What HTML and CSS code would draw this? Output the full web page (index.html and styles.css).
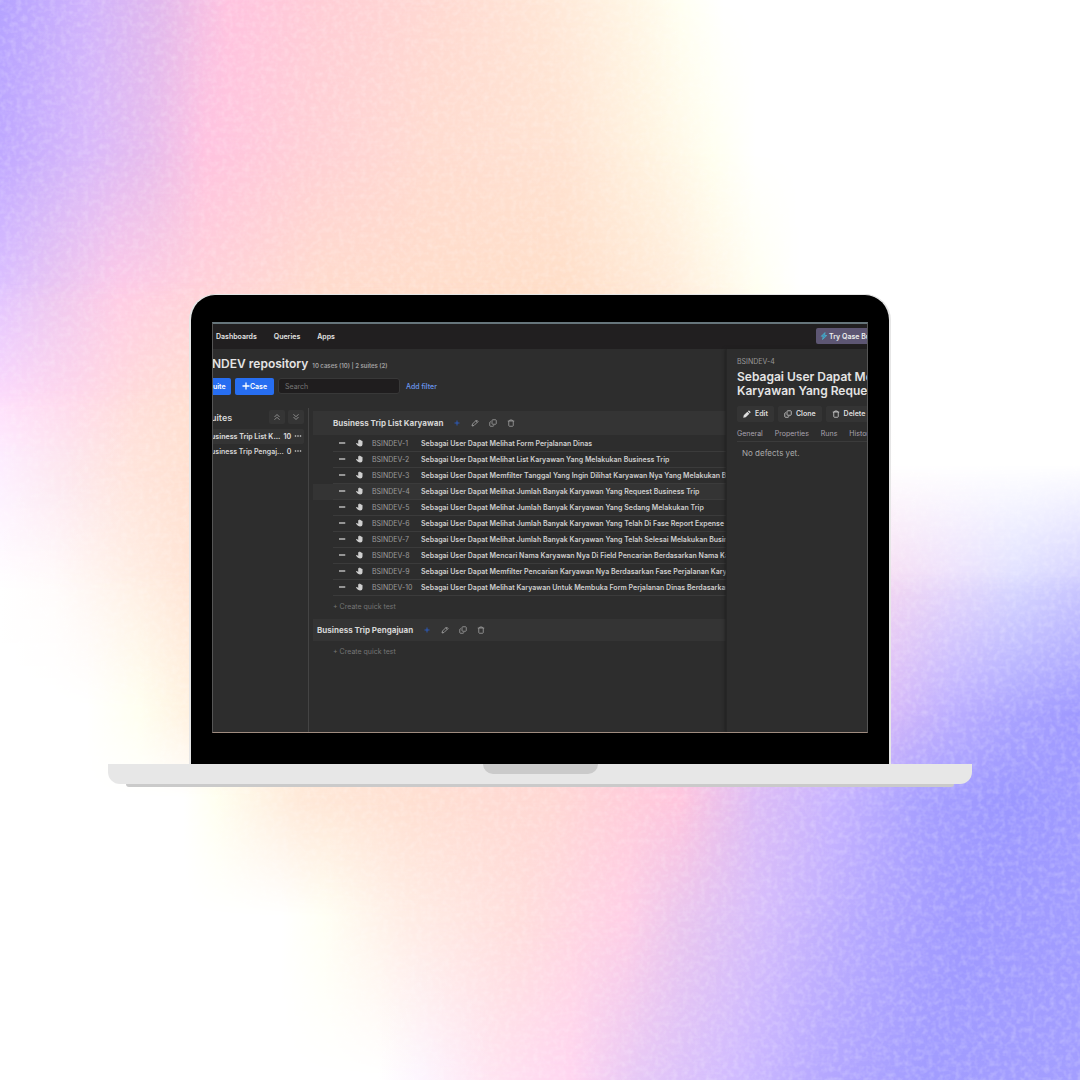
FILE: index.html
```html
<!DOCTYPE html>
<html lang="id">
<head>
<meta charset="utf-8">
<title>BSINDEV repository</title>
<meta name="viewport" content="width=device-width, initial-scale=1">
<link rel="stylesheet" href="styles.css">
</head>
<body>
<svg class="sprite" aria-hidden="true">
  <symbol id="pencil" viewBox="0 0 16 16"><path d="M2 14l1-4 8-8 3 3-8 8z" fill="none" stroke="currentColor" stroke-width="1.6" stroke-linejoin="round"/><path d="M9.400 3.600l3 3" stroke="currentColor" stroke-width="1.600"/></symbol>
  <symbol id="pencil-solid" viewBox="0 0 16 16"><path d="M.5 15.500l1-5 7.200-7.200 4 4-7.200 7.200zM9.700 2.300l1-1q1-1 2 0l2 2q1 1 0 2l-1 1z" fill="currentColor"/></symbol>
  <symbol id="copy" viewBox="0 0 16 16"><rect x="6" y="1.500" width="8.500" height="9" rx="1.500" fill="none" stroke="currentColor" stroke-width="1.500"/><path d="M4 5.500H3Q1.500 5.500 1.500 7v6q0 1.500 1.500 1.500h5q1.500 0 1.500-1.500v-.5" fill="none" stroke="currentColor" stroke-width="1.500"/></symbol>
  <symbol id="trash" viewBox="0 0 16 16"><path d="M1.500 4h13M5.500 4V2h5v2M3.500 4v9q0 1.500 1.500 1.500h6q1.500 0 1.500-1.500V4" fill="none" stroke="currentColor" stroke-width="1.500"/></symbol>
  <symbol id="plus" viewBox="0 0 16 16"><path d="M8 1v14M1 8h14" stroke="currentColor" stroke-width="2.600"/></symbol>
  <symbol id="plus-thin" viewBox="0 0 16 16"><path d="M8 3v10M3 8h10" stroke="currentColor" stroke-width="1.600"/></symbol>
  <symbol id="minus" viewBox="0 0 16 16"><path d="M2 8h12.500" stroke="currentColor" stroke-width="2.600"/></symbol>
  <symbol id="hand" viewBox="0 0 16 16"><path d="M4.400 8V3.200q0-1 1-1t1 1V2q0-1 1.100-1t1.100 1v.800q0-1 1.100-1t1.100 1v1.600q0-1 1.100-1t1.100 1V10q0 5-5 5Q4.500 15 2.800 12.700L.6 9.800Q-.1 8.700.9 8.100q.9-.5 1.700.3l1.800 1.600z" fill="currentColor"/></symbol>
  <symbol id="up" viewBox="0 0 16 16"><path d="M3 8l5-5 5 5M3 13.500l5-5 5 5" fill="none" stroke="currentColor" stroke-width="1.500"/></symbol>
  <symbol id="down" viewBox="0 0 16 16"><path d="M3 2.500l5 5 5-5M3 8l5 5 5-5" fill="none" stroke="currentColor" stroke-width="1.500"/></symbol>
  <symbol id="dots" viewBox="0 0 16 16"><circle cx="3" cy="8" r="1.600" fill="currentColor"/><circle cx="8" cy="8" r="1.600" fill="currentColor"/><circle cx="13" cy="8" r="1.600" fill="currentColor"/></symbol>
  <symbol id="bolt" viewBox="0 0 16 16"><path d="M10 1L2.500 8.500h4L5 15l8.500-8h-4z" fill="#3c8fb8" stroke="#4fc3d9" stroke-width="1.200" stroke-linejoin="round"/></symbol>
</svg>
<div class="scene">
  <div class="backdrop" aria-hidden="true">
    <div class="band band-1"></div><div class="band band-2"></div><div class="band band-3"></div><div class="band band-4"></div><div class="band band-5"></div><div class="band band-6"></div><div class="band band-7"></div><div class="band band-8"></div><div class="band band-9"></div><div class="band band-10"></div>
    <svg class="band grain"><filter id="speckle" x="0" y="0" width="100%" height="100%"><feTurbulence type="fractalNoise" baseFrequency="0.18" numOctaves="2" seed="4"/><feColorMatrix values="0 0 0 0 1  0 0 0 0 1  0 0 0 0 1  1.800 0 0 0 -0.720"/></filter><rect width="100%" height="100%" filter="url(#speckle)"/></svg>
  </div>
  <main class="laptop">
    <div class="lid">
      <div class="screen">
        <header class="topbar">
          <nav class="nav"><a href="#">Dashboards</a><a href="#">Queries</a><a href="#">Apps</a></nav>
          <button class="try"><svg class="icon"><use href="#bolt"/></svg>Try Qase Business</button>
        </header>
        <div class="app">
          <section class="repo">
            <div class="heading"><h1>NDEV repository</h1><span class="stats">10 cases (10) | 2 suites (2)</span></div>
            <div class="toolbar">
              <button class="primary primary-cut">uite</button>
              <button class="primary"><svg class="icon"><use href="#plus"/></svg>Case</button>
              <input class="search" type="text" placeholder="Search" aria-label="Search">
              <a class="filter" href="#">Add filter</a>
            </div>
            <div class="columns">
              <aside class="suites">
                <div class="suites-head"><h2>uites</h2>
                  <button class="square" aria-label="Collapse all"><svg class="icon"><use href="#up"/></svg></button>
                  <button class="square" aria-label="Expand all"><svg class="icon"><use href="#down"/></svg></button>
                </div>
                <a class="suite suite-on" href="#"><span class="suite-name">usiness Trip List K...</span><span>10</span><svg class="icon"><use href="#dots"/></svg></a>
                <a class="suite" href="#"><span class="suite-name">usiness Trip Pengaj...</span><span>0</span><svg class="icon"><use href="#dots"/></svg></a>
              </aside>
              <div class="cases">
                <div class="group group-nested"><h3>Business Trip List Karyawan</h3>
                  <button class="tool add" aria-label="Add case"><svg class="icon"><use href="#plus-thin"/></svg></button>
                  <button class="tool" aria-label="Edit suite"><svg class="icon"><use href="#pencil"/></svg></button>
                  <button class="tool" aria-label="Clone suite"><svg class="icon"><use href="#copy"/></svg></button>
                  <button class="tool" aria-label="Delete suite"><svg class="icon"><use href="#trash"/></svg></button>
                </div>
                <table class="list">
                  <colgroup><col class="c-pad"><col class="c-icon"><col class="c-icon"><col class="c-id"><col></colgroup>
                  <tbody>
                  <tr><td></td><td><svg class="icon"><use href="#minus"/></svg></td><td><svg class="icon"><use href="#hand"/></svg></td><td class="id">BSINDEV-1</td><td>Sebagai User Dapat Melihat Form Perjalanan Dinas</td></tr>
                  <tr><td></td><td><svg class="icon"><use href="#minus"/></svg></td><td><svg class="icon"><use href="#hand"/></svg></td><td class="id">BSINDEV-2</td><td>Sebagai User Dapat Melihat List Karyawan Yang Melakukan Business Trip</td></tr>
                  <tr><td></td><td><svg class="icon"><use href="#minus"/></svg></td><td><svg class="icon"><use href="#hand"/></svg></td><td class="id">BSINDEV-3</td><td>Sebagai User Dapat Memfilter Tanggal Yang Ingin Dilihat Karyawan Nya Yang Melakukan Business Trip</td></tr>
                  <tr class="on"><td></td><td><svg class="icon"><use href="#minus"/></svg></td><td><svg class="icon"><use href="#hand"/></svg></td><td class="id">BSINDEV-4</td><td>Sebagai User Dapat Melihat Jumlah Banyak Karyawan Yang Request Business Trip</td></tr>
                  <tr><td></td><td><svg class="icon"><use href="#minus"/></svg></td><td><svg class="icon"><use href="#hand"/></svg></td><td class="id">BSINDEV-5</td><td>Sebagai User Dapat Melihat Jumlah Banyak Karyawan Yang Sedang Melakukan Trip</td></tr>
                  <tr><td></td><td><svg class="icon"><use href="#minus"/></svg></td><td><svg class="icon"><use href="#hand"/></svg></td><td class="id">BSINDEV-6</td><td>Sebagai User Dapat Melihat Jumlah Banyak Karyawan Yang Telah Di Fase Report Expense</td></tr>
                  <tr><td></td><td><svg class="icon"><use href="#minus"/></svg></td><td><svg class="icon"><use href="#hand"/></svg></td><td class="id">BSINDEV-7</td><td>Sebagai User Dapat Melihat Jumlah Banyak Karyawan Yang Telah Selesai Melakukan Business Trip</td></tr>
                  <tr><td></td><td><svg class="icon"><use href="#minus"/></svg></td><td><svg class="icon"><use href="#hand"/></svg></td><td class="id">BSINDEV-8</td><td>Sebagai User Dapat Mencari Nama Karyawan Nya Di Field Pencarian Berdasarkan Nama Karyawan</td></tr>
                  <tr><td></td><td><svg class="icon"><use href="#minus"/></svg></td><td><svg class="icon"><use href="#hand"/></svg></td><td class="id">BSINDEV-9</td><td>Sebagai User Dapat Memfilter Pencarian Karyawan Nya Berdasarkan Fase Perjalanan Karyawan</td></tr>
                  <tr><td></td><td><svg class="icon"><use href="#minus"/></svg></td><td><svg class="icon"><use href="#hand"/></svg></td><td class="id">BSINDEV-10</td><td>Sebagai User Dapat Melihat Karyawan Untuk Membuka Form Perjalanan Dinas Berdasarkan Fase</td></tr>
                  </tbody>
                </table>
                <a class="quick" href="#">+ Create quick test</a>
                <div class="group"><h3>Business Trip Pengajuan</h3>
                  <button class="tool add" aria-label="Add case"><svg class="icon"><use href="#plus-thin"/></svg></button>
                  <button class="tool" aria-label="Edit suite"><svg class="icon"><use href="#pencil"/></svg></button>
                  <button class="tool" aria-label="Clone suite"><svg class="icon"><use href="#copy"/></svg></button>
                  <button class="tool" aria-label="Delete suite"><svg class="icon"><use href="#trash"/></svg></button>
                </div>
                <a class="quick" href="#">+ Create quick test</a>
              </div>
            </div>
          </section>
          <aside class="detail">
            <span class="detail-id">BSINDEV-4</span>
            <h2 class="detail-title">Sebagai User Dapat Melihat<br>Karyawan Yang Request</h2>
            <div class="actions">
              <button class="action"><svg class="icon"><use href="#pencil-solid"/></svg>Edit</button>
              <button class="action"><svg class="icon"><use href="#copy"/></svg>Clone</button>
              <button class="action"><svg class="icon"><use href="#trash"/></svg>Delete</button>
            </div>
            <nav class="tabs"><a href="#">General</a><a href="#">Properties</a><a href="#">Runs</a><a href="#">History</a></nav>
            <p class="empty">No defects yet.</p>
          </aside>
        </div>
      </div>
    </div>
    <div class="base"><div class="notch"></div></div>
    <div class="foot"></div>
  </main>
</div>
</body>
</html>
```
FILE: styles.css
```css
* { box-sizing: border-box; }
body { margin: 0; font-family: Inter, "Liberation Sans", sans-serif; font-size: 7px; color: #d6d6d6; background: #fff; }
h1, h2, h3, p { margin: 0; }
a { color: inherit; text-decoration: none; }
button, input { font: inherit; color: inherit; border: 0; margin: 0; padding: 0; background: none; }
.sprite { position: absolute; width: 0; height: 0; }
.icon { display: block; width: 8px; height: 8px; flex: none; }

.scene { display: grid; min-height: 100vh; overflow: hidden; }
.backdrop, .laptop { grid-area: 1 / 1; }
.backdrop { display: grid; }

/* Each band fades in over the one before it, down the page. */
.band { grid-area: 1 / 1; width: 100%; height: 100%; }
.band-1 { background: linear-gradient(90deg, #b5a3ff 0%, #d0b3fc 8%, #e3b9ec 15%, #ffc3e0 21%, #ffced6 30%, #ffdad2 41%, #ffe6d6 50%, #fff5e4 58%, #fffff2 63%, #fff 67%); }
.band-2 { background: linear-gradient(90deg, #bfa8ff 0%, #d8b8fa 8%, #e8bcec 14%, #ffc3e0 19%, #ffcfd6 28%, #ffdcd0 40%, #ffe3d2 52%, #fff3e0 60%, #fffff0 66%, #fff 70%); mask-image: linear-gradient(transparent 0%, #000 14%); }
.band-3 { background: linear-gradient(90deg, #dfc2ff 0%, #ecc6f0 5%, #ffcbe6 11%, #ffd2d8 19%, #ffdccc 30%, #ffdec8 52%, #ffead8 62%, #fffff0 70%, #fff 74%); mask-image: linear-gradient(transparent 14%, #000 28%); }
.band-4 { background: linear-gradient(90deg, #ffdcfa 0%, #ffd8ea 7%, #ffdcd8 13%, #ffdfd0 18%, #ffdec8 50%, #fffff0 75%, #fff 80%); mask-image: linear-gradient(transparent 26%, #000 38%); }
.band-5 { background: linear-gradient(90deg, #fdeeff 0%, #fde6ee 6%, #ffe4dc 12%, #ffe0d0 18%, #ffdcd0 50%, #fff 83%, #fff 100%); mask-image: linear-gradient(transparent 36%, #000 43%); }
.band-6 { background: linear-gradient(90deg, #fff 0%, #fffcfb 5%, #fff0e6 12%, #ffe4d4 18%, #ffd0d0 50%, #f8d8ee 80%, #eadcfb 88%, #dcdcff 94%, #cfccff 100%); mask-image: linear-gradient(transparent 43%, #000 55%); }
.band-7 { background: linear-gradient(90deg, #fff 0%, #fff 8%, #fffff0 13%, #fff0de 18%, #ffd0d0 50%, #d8baf8 82%, #bcaeff 88%, #aaa3ff 94%, #9f99ff 100%); mask-image: linear-gradient(transparent 53%, #000 66%); }
.band-8 { background: linear-gradient(90deg, #fff 0%, #fff 17%, #fffff0 20%, #ffe9d8 28%, #ffe0d2 38%, #ffd8d4 51%, #ffc6de 63%, #dcbcf6 70%, #c8b4ff 77%, #a8a0ff 85%, #9b97ff 93%, #a09bff 100%); mask-image: linear-gradient(transparent 66%, #000 74%); }
.band-9 { background: linear-gradient(90deg, #fff 0%, #fff 26%, #fffff4 30%, #ffeee6 37%, #ffdedc 48%, #ffcfe6 58%, #eac6ee 63%, #d4bcfc 71%, #b5a8ff 80%, #9f99ff 89%, #a19cff 100%); mask-image: linear-gradient(transparent 74%, #000 85%); }
.band-10 { background: linear-gradient(90deg, #fff 0%, #fff 35%, #fdf5fe 39%, #ffe2f0 46%, #ffd5f0 53%, #e6c8f6 59%, #d0bbff 68%, #b5a8ff 76%, #a19cff 86%, #a39eff 100%); mask-image: linear-gradient(transparent 85%, #000 100%); }
.grain { opacity: .25; }

.laptop { z-index: 1; width: 80%; margin: auto; }
.lid { margin: 0 81px; padding: 27px 21px 31px; background: #000; border: 2px solid #e6e6e6; border-top-width: 1px; border-bottom: 0; border-radius: 26px 26px 0 0; }
.base { height: 20px; background: #e7e7e7; border-radius: 0 0 12px 12px; }
.notch { width: 115px; height: 10px; margin: 0 auto; background: #cacaca; border-radius: 0 0 10px 10px; }
.foot { height: 3px; margin: 0 18px; background: #cacaca; border-radius: 0 0 6px 6px; }

.screen { display: flex; flex-direction: column; min-height: 411px; overflow: hidden; background: #2d2d2d; border: 1px solid #555; border-top: 2px solid #66757b; border-bottom-color: #a08c80; }
.topbar { display: flex; align-items: center; justify-content: space-between; height: 25px; padding-left: 3px; background: #211f20; overflow: hidden; }
.nav { display: flex; gap: 17px; font-weight: 600; color: #e4e4e4; }
.try { display: flex; flex: none; align-items: center; gap: 1px; width: 51px; height: 16px; padding-left: 4px; font-weight: 600; color: #eee; white-space: nowrap; overflow: hidden; background: #5d5673; border-radius: 2px 0 0 2px; }

.app { display: flex; flex: 1; }
.repo { display: flex; flex: 1; flex-direction: column; min-width: 0; }
.heading { display: flex; align-items: baseline; gap: 4px; padding-top: 7px; line-height: 16px; }
.heading h1 { margin-left: -1px; font-size: 12px; font-weight: 600; color: #e4e4e4; }
.stats { font-size: 6px; font-weight: 600; color: #a2a2a2; }
.toolbar { display: flex; align-items: center; gap: 4px; padding-top: 4px; }
.primary { display: flex; align-items: center; justify-content: center; width: 39px; height: 17px; font-weight: 600; color: #fff; background: #276ef1; border-radius: 2px; }
.primary-cut { justify-content: flex-start; width: 18px; border-radius: 0 2px 2px 0; }
.search { width: 122px; height: 16px; padding: 0 6px; background: #1f1d1e; border: 1px solid #383838; border-radius: 3px; }
.search::placeholder { color: #777; opacity: 1; }
.filter { padding-left: 2px; font-weight: 500; color: #6b97ee; }

.columns { display: flex; flex: 1; margin-top: 13px; }
.suites { width: 96px; padding-right: 4px; border-right: 1px solid #444; }
.suites-head { display: flex; align-items: center; gap: 3px; height: 21px; padding-bottom: 2px; }
.suites-head h2 { flex: 1; margin-left: -2px; font-size: 9px; font-weight: 600; }
.square { display: grid; place-items: center; width: 16px; height: 14px; color: #aaa; background: #353535; border-radius: 2px; }
.suite { display: flex; align-items: center; gap: 3px; height: 15px; font-weight: 600; padding-right: 3px; }
.suite-name { flex: 1; margin-left: -2px; white-space: nowrap; }
.suite-on { font-weight: 700; background: #343434; border-radius: 0 2px 2px 0; }

.cases { flex: 1; min-width: 0; padding: 3px 0 0 4px; }
.group { display: flex; align-items: center; gap: 10px; height: 22px; padding-left: 4px; background: #343434; }
.group-nested { height: 24px; margin-bottom: 1px; padding-left: 20px; }
.group h3 { font-size: 8px; font-weight: 700; color: #d6d6d6; }
.tool { color: #aaa; }
.add { color: #2b62d6; }
.list { width: 100%; table-layout: fixed; border-spacing: 0; font-weight: 600; color: #cfcfcf; }
.list td { height: 16px; padding: 0; line-height: 15px; white-space: nowrap; overflow: hidden; border-bottom: 1px solid #3b3b3b; }
.list td:first-child { border-bottom-color: transparent; }
.list .icon { margin-left: 5px; }
.list td:nth-child(4), .list td:nth-child(5) { padding-left: 3px; }
.list .id { font-weight: 400; color: #9c9c9c; }
.on { background: #343434; }
.c-pad { width: 20px; }
.c-icon { width: 18px; }
.c-id { width: 49px; }
.quick { display: block; padding: 0 0 2px 20px; line-height: 21px; color: #757575; }

.detail { display: flex; flex: none; flex-direction: column; align-items: flex-start; width: 141px; padding: 8px 0 0 10px; white-space: nowrap; overflow: hidden; border-left: 1px solid #262626; box-shadow: -1px 0 3px #1f1f1f; }
.detail-id { line-height: 10px; color: #999; }
.detail-title { padding-top: 3px; font-size: 12px; font-weight: 600; line-height: 14px; color: #e4e4e4; }
.actions { display: flex; gap: 4px; padding-top: 8px; }
.action { display: flex; flex: none; align-items: center; gap: 4px; height: 16px; padding: 0 6px; font-weight: 600; color: #dedede; background: #343434; border-radius: 2px; }
.tabs { display: flex; gap: 12px; align-self: stretch; padding-top: 4px; line-height: 15px; color: #a9a3ad; border-bottom: 1px solid #3b3b3b; }
.empty { padding: 6px 0 0 5px; font-size: 8px; line-height: 10px; color: #aaa; }
```
